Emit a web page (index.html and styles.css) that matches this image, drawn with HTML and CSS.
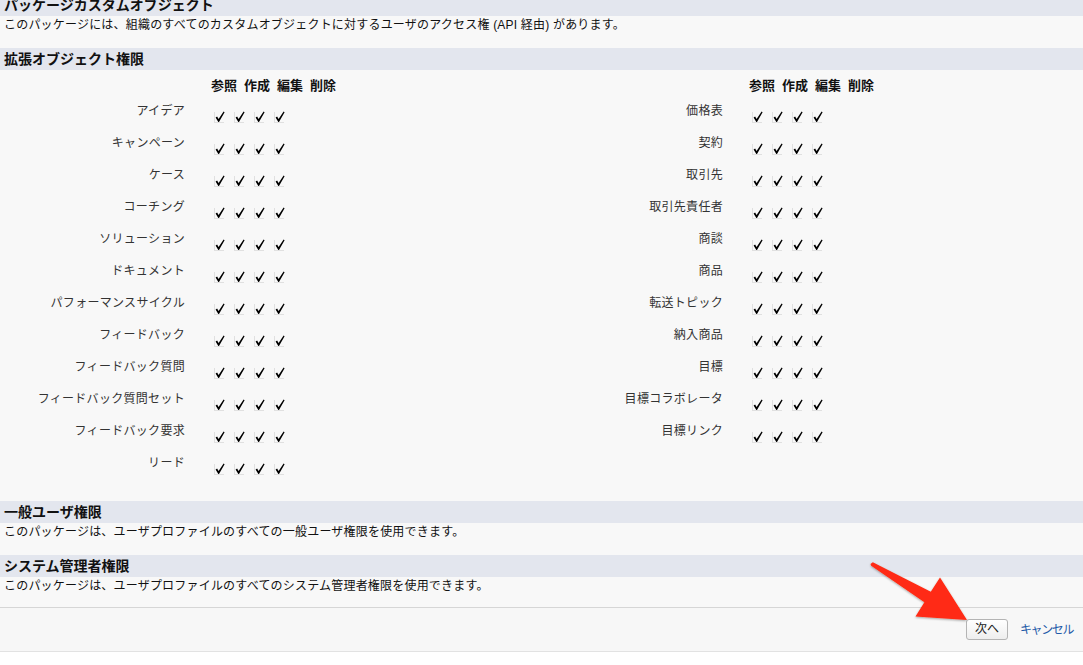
FILE: index.html
```html
<!DOCTYPE html>
<html lang="ja">
<head>
<meta charset="utf-8">
<title>パッケージ権限</title>
<link rel="stylesheet" href="styles.css">
</head>
<body>
<div class="page">
  <div class="band">パッケージカスタムオブジェクト</div>
  <div class="desc">このパッケージには、組織のすべてのカスタムオブジェクトに対するユーザのアクセス権 (API 経由) があります。</div>

  <div class="band">拡張オブジェクト権限</div>
  <div class="perm-table">
    <div class="perm-col">
      <div class="label"></div>
      <div class="heads"><span>参照</span><span>作成</span><span>編集</span><span>削除</span></div>
      <div class="label">アイデア</div><div class="checks"><i class="ck"></i><i class="ck"></i><i class="ck"></i><i class="ck"></i></div>
      <div class="label">キャンペーン</div><div class="checks"><i class="ck"></i><i class="ck"></i><i class="ck"></i><i class="ck"></i></div>
      <div class="label">ケース</div><div class="checks"><i class="ck"></i><i class="ck"></i><i class="ck"></i><i class="ck"></i></div>
      <div class="label">コーチング</div><div class="checks"><i class="ck"></i><i class="ck"></i><i class="ck"></i><i class="ck"></i></div>
      <div class="label">ソリューション</div><div class="checks"><i class="ck"></i><i class="ck"></i><i class="ck"></i><i class="ck"></i></div>
      <div class="label">ドキュメント</div><div class="checks"><i class="ck"></i><i class="ck"></i><i class="ck"></i><i class="ck"></i></div>
      <div class="label">パフォーマンスサイクル</div><div class="checks"><i class="ck"></i><i class="ck"></i><i class="ck"></i><i class="ck"></i></div>
      <div class="label">フィードバック</div><div class="checks"><i class="ck"></i><i class="ck"></i><i class="ck"></i><i class="ck"></i></div>
      <div class="label">フィードバック質問</div><div class="checks"><i class="ck"></i><i class="ck"></i><i class="ck"></i><i class="ck"></i></div>
      <div class="label">フィードバック質問セット</div><div class="checks"><i class="ck"></i><i class="ck"></i><i class="ck"></i><i class="ck"></i></div>
      <div class="label">フィードバック要求</div><div class="checks"><i class="ck"></i><i class="ck"></i><i class="ck"></i><i class="ck"></i></div>
      <div class="label">リード</div><div class="checks"><i class="ck"></i><i class="ck"></i><i class="ck"></i><i class="ck"></i></div>
    </div>
    <div class="perm-col">
      <div class="label"></div>
      <div class="heads"><span>参照</span><span>作成</span><span>編集</span><span>削除</span></div>
      <div class="label">価格表</div><div class="checks"><i class="ck"></i><i class="ck"></i><i class="ck"></i><i class="ck"></i></div>
      <div class="label">契約</div><div class="checks"><i class="ck"></i><i class="ck"></i><i class="ck"></i><i class="ck"></i></div>
      <div class="label">取引先</div><div class="checks"><i class="ck"></i><i class="ck"></i><i class="ck"></i><i class="ck"></i></div>
      <div class="label">取引先責任者</div><div class="checks"><i class="ck"></i><i class="ck"></i><i class="ck"></i><i class="ck"></i></div>
      <div class="label">商談</div><div class="checks"><i class="ck"></i><i class="ck"></i><i class="ck"></i><i class="ck"></i></div>
      <div class="label">商品</div><div class="checks"><i class="ck"></i><i class="ck"></i><i class="ck"></i><i class="ck"></i></div>
      <div class="label">転送トピック</div><div class="checks"><i class="ck"></i><i class="ck"></i><i class="ck"></i><i class="ck"></i></div>
      <div class="label">納入商品</div><div class="checks"><i class="ck"></i><i class="ck"></i><i class="ck"></i><i class="ck"></i></div>
      <div class="label">目標</div><div class="checks"><i class="ck"></i><i class="ck"></i><i class="ck"></i><i class="ck"></i></div>
      <div class="label">目標コラボレータ</div><div class="checks"><i class="ck"></i><i class="ck"></i><i class="ck"></i><i class="ck"></i></div>
      <div class="label">目標リンク</div><div class="checks"><i class="ck"></i><i class="ck"></i><i class="ck"></i><i class="ck"></i></div>
    </div>
  </div>

  <div class="band">一般ユーザ権限</div>
  <div class="desc">このパッケージは、ユーザプロファイルのすべての一般ユーザ権限を使用できます。</div>

  <div class="band">システム管理者権限</div>
  <div class="desc last">このパッケージは、ユーザプロファイルのすべてのシステム管理者権限を使用できます。</div>

  <div class="footer">
    <button class="btn" type="button">次へ</button>
    <a class="cancel" href="#">キャンセル</a>
  </div>

  <svg class="arrow" width="130" height="90" viewBox="0 0 130 90" aria-hidden="true">
    <defs>
      <filter id="sh" x="-20%" y="-20%" width="140%" height="140%">
        <feDropShadow dx="0" dy="1" stdDeviation="1.2" flood-color="#000" flood-opacity="0.35"/>
      </filter>
    </defs>
    <polygon filter="url(#sh)" fill="#ff2b12"
      points="12.8,8.2 70.8,37.8 80,23.5 107,66 55.5,62.5 64.4,48.3 11.2,11.8 10.5,10"/>
  </svg>
</div>
</body>
</html>
```
FILE: styles.css
```css
html, body {
  margin: 0;
  padding: 0;
  background: #ffffff;
}
body {
  font-family: "Liberation Sans", "Noto Sans CJK JP", sans-serif;
  font-size: 12px;
  color: #111;
}
.page {
  position: relative;
  margin-top: -6px;
  background: #f8f8f8;
}
.band {
  height: 22px;
  line-height: 22px;
  padding: 0 4px;
  background: #e3e6ee;
  font-weight: bold;
  font-size: 14px;
  color: #111;
  white-space: nowrap;
  overflow: hidden;
}
.desc {
  height: 32px;
  padding: 0 4px;
  line-height: 18px;
  font-size: 12px;
  letter-spacing: 0.2px;
  color: #111;
  box-sizing: border-box;
}
.desc.last {
  height: 30px;
}
.perm-table {
  display: flex;
  padding: 6px 0 21px;
}
.perm-col {
  width: 538px;
  display: grid;
  grid-template-columns: 186px 1fr;
  grid-auto-rows: 32px;
  grid-template-rows: 20px;
}
.label {
  text-align: right;
  line-height: 18px;
  padding-top: 6px;
  padding-right: 1px;
  color: #333;
  font-size: 12px;
  letter-spacing: 0.3px;
  white-space: nowrap;
}
.heads {
  display: flex;
  gap: 7px;
  padding-left: 25px;
  font-weight: bold;
  font-size: 13px;
  line-height: 20px;
  color: #111;
}
.checks {
  display: flex;
  gap: 8px;
  padding-left: 28px;
  padding-top: 15px;
  box-sizing: border-box;
}
.ck {
  display: block;
  width: 12px;
  height: 12px;
  background-image: url("data:image/svg+xml;utf8,<svg xmlns='http://www.w3.org/2000/svg' width='12' height='12' viewBox='0 0 12 12'><path d='M0.5 1.5V11.5H10.5' fill='none' stroke='%23c8c8c8' stroke-width='1' stroke-dasharray='1 1'/><path d='M1.6 6.4 L3.1 5.6 L4.6 8.1 L9.6 0.6 L10.6 1.3 L5 11 L4.3 11 Z' fill='%23000'/></svg>");
  background-repeat: no-repeat;
}
.footer {
  display: flex;
  align-items: center;
  justify-content: flex-end;
  gap: 12px;
  height: 43px;
  padding-right: 10px;
  background: #f7f7f7;
  border-top: 1px solid #d6d6d6;
  border-bottom: 1px solid #e2e2e2;
  margin-bottom: 13px;
}
.btn {
  width: 42px;
  height: 21px;
  padding: 0;
  font-family: "Liberation Sans", "Noto Sans CJK JP", sans-serif;
  font-size: 12px;
  color: #222;
  background: linear-gradient(#ffffff, #eeeeee);
  border: 1px solid #b4b4b4;
  border-radius: 3px;
  line-height: 19px;
}
.cancel {
  color: #1e5aa8;
  text-decoration: none;
  font-size: 12px;
  letter-spacing: -1.4px;
  line-height: 20px;
}
.arrow {
  position: absolute;
  left: 860px;
  top: 560px;
}
```
